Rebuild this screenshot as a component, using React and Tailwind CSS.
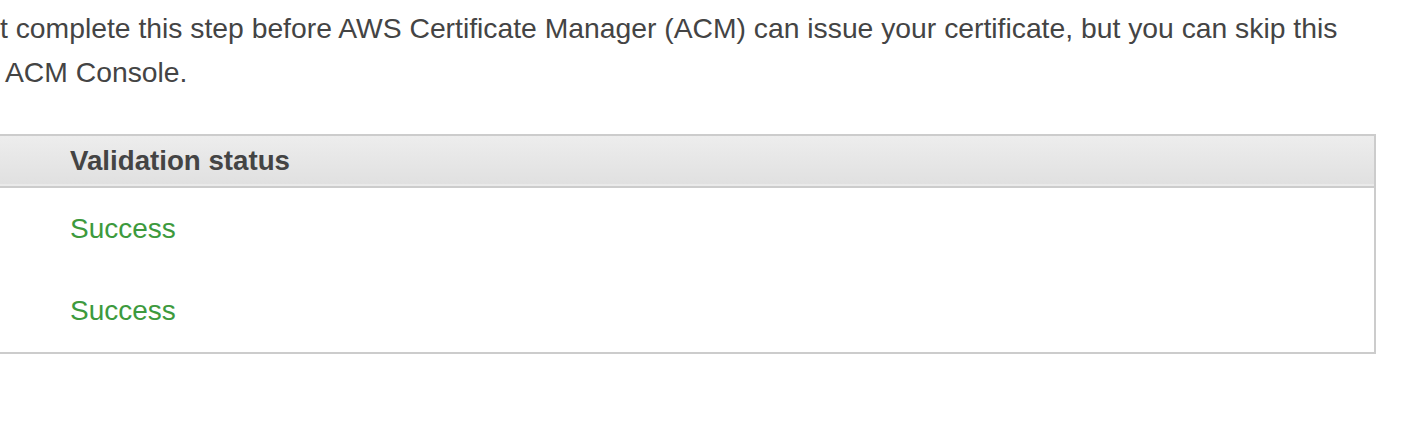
export default function App() {
  const rows = ['Success', 'Success']

  return (
    <div className="min-h-screen w-[1420px] bg-white text-[#444] font-['Liberation_Sans',Arial,sans-serif] overflow-hidden">
      <p className="mt-[6px] text-[28.3px] leading-[44px] whitespace-nowrap">
        t complete this step before AWS Certificate Manager (ACM) can issue your certificate, but you can skip this
        <br />
        <span className="pl-[5px]">ACM Console.</span>
      </p>

      <div className="mt-[40px] w-[1376px] border-2 border-l-0 border-[#cccccc]">
        <div className="h-[52px] flex items-center pl-[70px] bg-gradient-to-b from-[#ededed] to-[#e0e0e0] border-b-2 border-[#cccccc] shadow-[inset_0_-2px_0_#eaeaea]">
          <span className="text-[27.7px] font-bold leading-none">Validation status</span>
        </div>
        {rows.map((r, i) => (
          <div key={i} className="h-[82px] flex items-center pl-[70px] bg-white">
            <span className="text-[28px] text-[#3d9a3d] leading-none">{r}</span>
          </div>
        ))}
      </div>
    </div>
  )
}
